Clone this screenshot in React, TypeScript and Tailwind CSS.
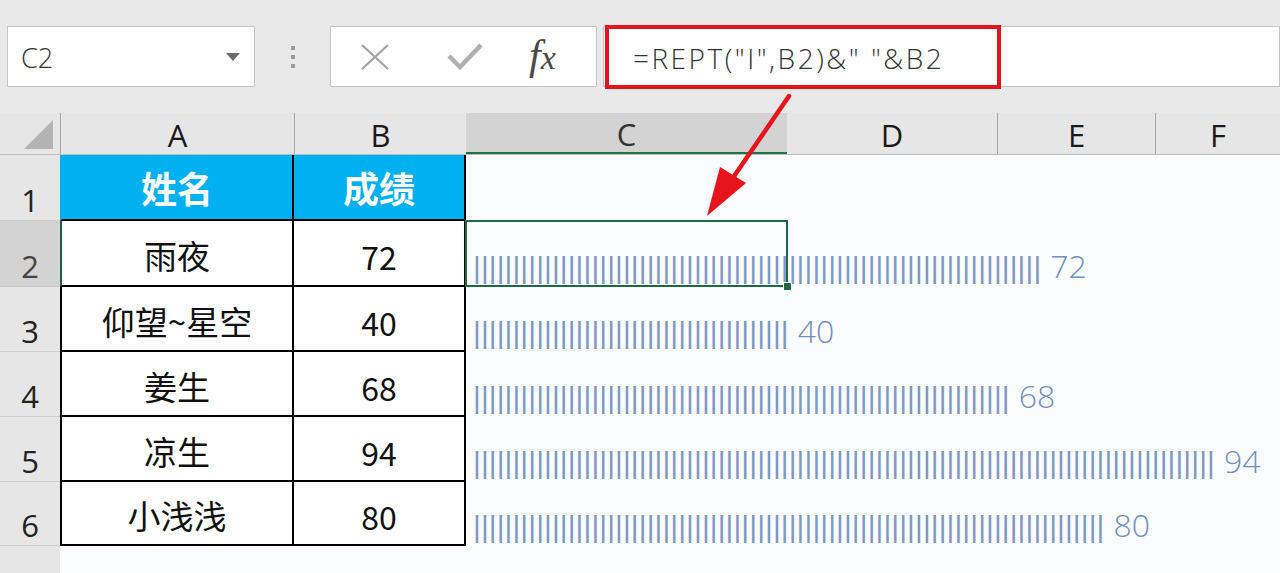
import React from "react";

const rows = [
  { n: 1, h: 66, name: "姓名", score: "成绩", header: true },
  { n: 2, h: 66, name: "雨夜", score: "72", v: 72 },
  { n: 3, h: 65, name: "仰望~星空", score: "40", v: 40 },
  { n: 4, h: 65, name: "姜生", score: "68", v: 68 },
  { n: 5, h: 65, name: "凉生", score: "94", v: 94 },
  { n: 6, h: 64, name: "小浅浅", score: "80", v: 80 },
];

const cjk = { fontFamily: '"Noto Sans CJK SC", "Noto Sans", sans-serif' };
const latin = { fontFamily: '"Liberation Sans", Arial, sans-serif' };
const open = { fontFamily: '"Open Sans", sans-serif' };

export default function App() {
  return (
    <div className="relative w-[1280px] h-[573px] overflow-hidden bg-[#e9e9e9] text-[#222]" style={cjk}>
      {/* Toolbar */}
      <div className="h-[113px] flex items-start pt-[26px]">
        <div className="ml-[7px] w-[248px] h-[61px] bg-white border border-[#c4c4c4] flex items-center justify-between pl-[13px] pr-[14px]">
          <span className="text-[27px] font-light text-[#333] pt-[4px]" style={open}>C2</span>
          <svg width="14" height="8" viewBox="0 0 14 8"><polygon points="0,0 14,0 7,8" fill="#6b6b6b" /></svg>
        </div>
        <div className="w-[75px] h-[61px] flex flex-col items-center justify-center gap-[5px]">
          <div className="w-[4px] h-[4px] bg-[#9b9b9b]" />
          <div className="w-[4px] h-[4px] bg-[#9b9b9b]" />
          <div className="w-[4px] h-[4px] bg-[#9b9b9b]" />
        </div>
        <div className="w-[267px] h-[61px] bg-white border border-[#c4c4c4] flex items-center">
          <svg className="ml-[29px]" width="30" height="28" viewBox="0 0 30 28">
            <line x1="2" y1="2" x2="28" y2="26" stroke="#a3a3a3" strokeWidth="2.2" />
            <line x1="28" y1="2" x2="2" y2="26" stroke="#a3a3a3" strokeWidth="2.2" />
          </svg>
          <svg className="ml-[57px]" width="36" height="30" viewBox="0 0 36 30">
            <polyline points="2,14 13,25 34,3" fill="none" stroke="#b0b0b0" strokeWidth="4.5" />
          </svg>
          <span className="ml-[46px] text-[42px] italic text-[#4a4a4a] leading-none pb-[4px]" style={{ fontFamily: '"Liberation Serif", serif' }}>
            f<span className="text-[34px]">x</span>
          </span>
        </div>
        <div className="relative ml-[6px] flex-1 h-[61px] bg-white border border-[#c4c4c4] flex items-center pl-[29px]">
          <span className="text-[28px] font-light tracking-[2.5px] text-[#333] whitespace-pre pt-[2px]" style={open}>
            =REPT("I",B2)&amp;" "&amp;B2
          </span>
          <div className="absolute left-[1px] top-[-2px] w-[396px] h-[64px] border-[4px] border-[#e3141c]" />
        </div>
      </div>

      {/* Column headers */}
      <div className="h-[42px] flex bg-[#e6e6e6] border-b border-[#bdbdbd] text-[31px] text-[#1a1a1a]" style={open}>
        <div className="w-[60px] flex items-end justify-end pr-[7px] pb-[5px]">
          <svg width="29" height="29" viewBox="0 0 29 29"><polygon points="29,0 29,29 0,29" fill="#b3b3b3" /></svg>
        </div>
        <div className="w-[234px] border-l border-[#a9a9a9] flex items-center justify-center leading-none pt-[4px]">A</div>
        <div className="w-[172px] border-l border-[#a9a9a9] flex items-center justify-center leading-none pt-[4px]">B</div>
        <div className="w-[321px] bg-[#d3d3d3] border-b-2 border-[#217346] flex items-center justify-center leading-none pt-[4px] text-[#333]">C</div>
        <div className="w-[210px] flex items-center justify-center leading-none pt-[4px]">D</div>
        <div className="w-[158px] border-l border-[#a9a9a9] flex items-center justify-center leading-none pt-[4px]">E</div>
        <div className="flex-1 border-l border-[#a9a9a9] flex items-center justify-center leading-none pt-[4px]">F</div>
      </div>

      {/* Rows */}
      <div className="flex flex-col bg-[#fbfcfe]">
        {rows.map((r) => (
          <div key={r.n} className="flex" style={{ height: r.h }}>
            <div
              className={
                r.n === 2
                  ? "w-[60px] shrink-0 bg-[#d3d3d3] border-b border-[#c9c9c9] flex items-end justify-center pb-[4px] text-[31px] leading-none text-[#444]"
                  : "w-[60px] shrink-0 bg-[#e6e6e6] border-b border-[#cfcfcf] flex items-end justify-center pb-[4px] text-[31px] leading-none text-[#222]"
              }
              style={open}
            >
              {r.n}
            </div>
            {r.header ? (
              <>
                <div className="w-[234px] shrink-0 bg-[#00b0f0] border-l-2 border-l-[#00b0f0] border-r-2 border-b-2 border-r-black border-b-black flex items-center justify-center text-[36px] font-bold text-white">
                  {r.name}
                </div>
                <div className="w-[172px] shrink-0 bg-[#00b0f0] border-r-2 border-b-2 border-black flex items-center justify-center text-[36px] font-bold text-white">
                  {r.score}
                </div>
              </>
            ) : (
              <>
                <div
                  className={
                    r.n === 2
                      ? "w-[234px] shrink-0 bg-white border-l-2 border-l-[#1f5f3c] border-r-2 border-b-2 border-r-black border-b-black flex items-center justify-center pt-[6px] text-[33px] text-[#111]"
                      : "w-[234px] shrink-0 bg-white border-l-2 border-r-2 border-b-2 border-black flex items-center justify-center pt-[6px] text-[33px] text-[#111]"
                  }
                >
                  {r.name}
                </div>
                <div className="w-[172px] shrink-0 bg-white border-r-2 border-b-2 border-black flex items-center justify-center pt-[6px] text-[32px] text-[#111]">
                  {r.score}
                </div>
              </>
            )}
            <div className="relative flex-1 flex items-end pl-[7px] whitespace-nowrap">
              {r.v ? (
                <span className="leading-[32px]">
                  <span className="text-[30px] tracking-[0.1px] text-[#7e98c6]" style={latin}>{"|".repeat(r.v)}</span>
                  <span className="text-[32px] font-light text-[#6f8fc6] pl-[9px]" style={open}>{r.v}</span>
                </span>
              ) : null}
              {r.n === 2 ? (
                <div className="absolute left-[-1px] top-[-1px] w-[323px] h-[67px] border-2 border-[#1e6a43]">
                  <div className="absolute right-[-6px] bottom-[-6px] w-[9px] h-[9px] bg-[#1e6a43] border border-white" />
                </div>
              ) : null}
            </div>
          </div>
        ))}
        <div className="flex h-[40px]">
          <div className="w-[60px] shrink-0 bg-[#e6e6e6]" />
          <div className="flex-1" />
        </div>
      </div>

      {/* Arrow */}
      <svg className="absolute left-0 top-0 pointer-events-none" width="1280" height="573" viewBox="0 0 1280 573">
        <line x1="789" y1="96" x2="726" y2="188" stroke="#e8141c" strokeWidth="4.5" strokeLinecap="round" />
        <polygon points="707,216 720,167 746,183" fill="#e8141c" />
      </svg>
    </div>
  );
}
